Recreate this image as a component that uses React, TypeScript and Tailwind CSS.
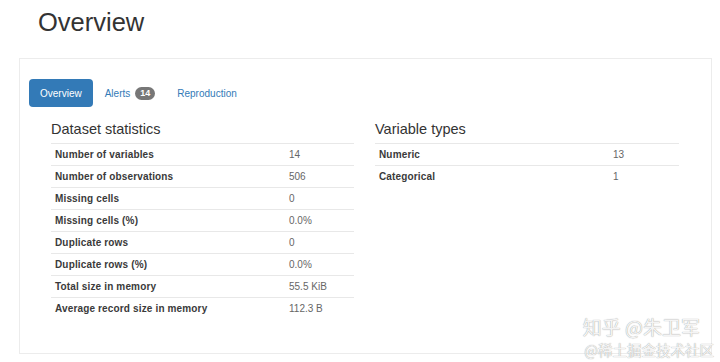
const stats = [
  ["Number of variables", "14"],
  ["Number of observations", "506"],
  ["Missing cells", "0"],
  ["Missing cells (%)", "0.0%"],
  ["Duplicate rows", "0"],
  ["Duplicate rows (%)", "0.0%"],
  ["Total size in memory", "55.5 KiB"],
  ["Average record size in memory", "112.3 B"],
];

const types = [
  ["Numeric", "13"],
  ["Categorical", "1"],
];

function StatTable({ title, rows }: { title: string; rows: string[][] }) {
  return (
    <div>
      <h3 className="h-[22px] text-[14.5px] leading-[20px] text-[#333]">{title}</h3>
      <table className="mt-[2px] w-full text-[10px]">
        <tbody>
          {rows.map(([label, value]) => (
            <tr key={label} className="h-[22px] border-t border-[#e8e8e8]">
              <th className="w-[234px] px-1 text-left font-bold tracking-[0.15px] text-[#3a3a3a]">{label}</th>
              <td className="px-1 text-[#666]">{value}</td>
            </tr>
          ))}
        </tbody>
      </table>
    </div>
  );
}

export default function App() {
  return (
    <div className="relative h-[362px] w-[720px] overflow-hidden bg-white font-['Liberation_Sans',Arial,sans-serif]">
      <h1 className="pl-[38px] pt-[5px] text-[25.5px] leading-[34px] text-[#333]">Overview</h1>

      <div className="ml-[19px] mt-[19px] h-[296px] w-[693px] border border-[#ececec] pt-[20px]">
        {/* tabs */}
        <div className="flex items-center pl-[9px] text-[10px]">
          <div className="flex h-[28px] items-center rounded-[4px] bg-[#337ab7] px-[11px] text-white">Overview</div>
          <div className="ml-[12px] flex items-center text-[#337ab7]">
            Alerts
            <span className="ml-[5px] rounded-[7px] bg-[#777] px-[5px] py-[1px] text-[9px] font-bold leading-[11px] text-white">14</span>
          </div>
          <div className="ml-[22px] text-[#337ab7]">Reproduction</div>
        </div>

        {/* content */}
        <div className="mt-[12px] grid grid-cols-[303px_304px] gap-[21px] pl-[31px]">
          <StatTable title="Dataset statistics" rows={stats} />
          <StatTable title="Variable types" rows={types} />
        </div>
      </div>

      {/* watermark */}
      <div className="absolute right-[6px] top-[314px] text-right font-['Noto_Sans_CJK_SC',sans-serif] text-[#f4f4f4] [text-shadow:0_0_1px_#888]">
        <div className="pr-[14px] text-[19px] leading-[25px]">知乎 @朱卫军</div>
        <div className="text-[14.5px] leading-[21px]">@稀土掘金技术社区</div>
      </div>
    </div>
  );
}
